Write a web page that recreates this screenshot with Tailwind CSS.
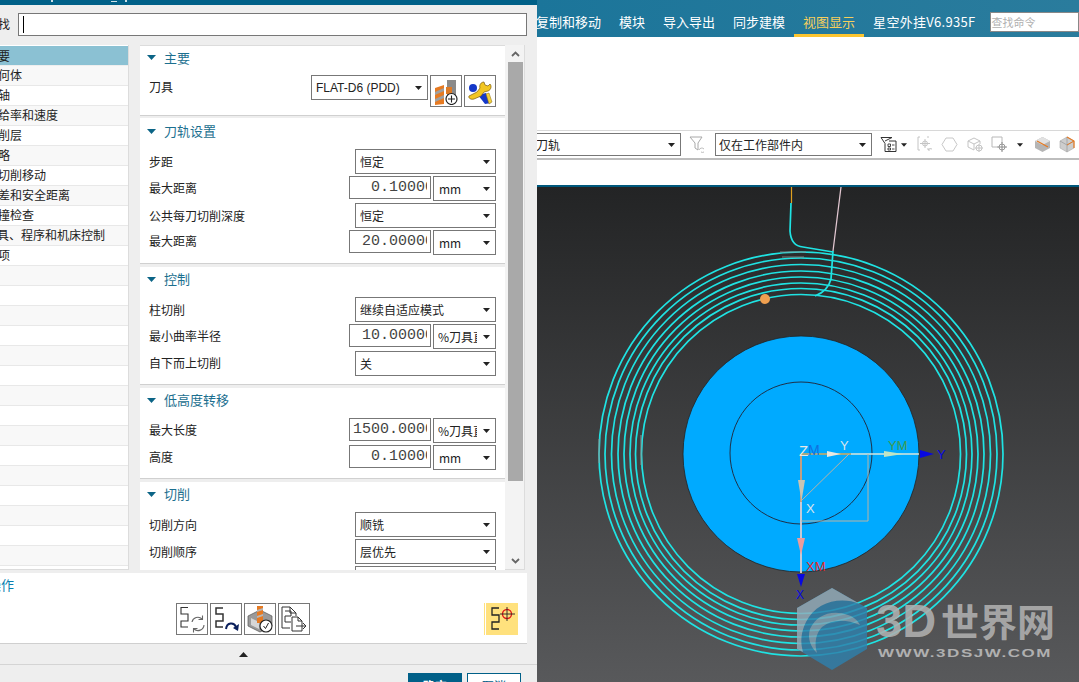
<!DOCTYPE html>
<html lang="en">
<head>
  <meta charset="UTF-8" />
  <title>刀轨设置</title>
  <script src="https://cdn.jsdelivr.net/npm/@tailwindcss/browser@4"></script>
</head>
<body class="h-[682px] w-[1079px] overflow-hidden flex bg-white text-[12px] text-[#222] font-['Noto_Sans_CJK_SC','Liberation_Sans',sans-serif]">

  <!-- dialog -->
  <aside class="w-[537px] h-[682px] shrink-0 bg-[#eeeeee] flex flex-col overflow-hidden">
    <div class="h-[5px] shrink-0 bg-[#006088] flex items-start pl-[51px]">
      <span class="w-[2px] h-[2px] bg-white/80"></span>
      <span class="ml-[58px] mt-[1px] w-[6px] h-px bg-white/80"></span>
      <span class="ml-[8px] w-[2px] h-[2px] bg-white/80"></span>
    </div>

    <!-- find -->
    <div class="h-[40px] shrink-0 flex items-start pr-[10px] pt-[8px]">
      <span class="w-[18px] -ml-[2px] leading-[22px] shrink-0">找</span>
      <div class="flex-1 h-[23px] ml-[2px] bg-white border border-[#777] flex items-center pl-[4px]"><span class="block w-px h-[17px] bg-black"></span></div>
    </div>

    <div class="flex h-[528px] shrink-0">
      <!-- nav list -->
      <ul class="w-[129px] h-[525px] shrink-0 bg-white border-r border-b border-[#dcdcdc] pt-px overflow-hidden">
        <li class="h-[20px] bg-[#8bc1d3] border-b border-[#eeeeee] leading-[19px] whitespace-nowrap"><span class="-ml-[14px] inline-block">主要</span></li>
        <li class="h-[20px] bg-[#f8f8f8] border-b border-[#e8e8e8] leading-[18px] whitespace-nowrap"><span class="-ml-[14px] inline-block">几何体</span></li>
        <li class="h-[20px] border-b border-[#e8e8e8] leading-[18px] whitespace-nowrap"><span class="-ml-[14px] inline-block">刀轴</span></li>
        <li class="h-[20px] bg-[#f8f8f8] border-b border-[#e8e8e8] leading-[18px] whitespace-nowrap"><span class="-ml-[14px] inline-block">进给率和速度</span></li>
        <li class="h-[20px] border-b border-[#e8e8e8] leading-[18px] whitespace-nowrap"><span class="-ml-[14px] inline-block">切削层</span></li>
        <li class="h-[20px] bg-[#f8f8f8] border-b border-[#e8e8e8] leading-[18px] whitespace-nowrap"><span class="-ml-[14px] inline-block">策略</span></li>
        <li class="h-[20px] border-b border-[#e8e8e8] leading-[18px] whitespace-nowrap"><span class="-ml-[14px] inline-block">非切削移动</span></li>
        <li class="h-[20px] bg-[#f8f8f8] border-b border-[#e8e8e8] leading-[18px] whitespace-nowrap"><span class="-ml-[14px] inline-block">公差和安全距离</span></li>
        <li class="h-[20px] border-b border-[#e8e8e8] leading-[18px] whitespace-nowrap"><span class="-ml-[14px] inline-block">碰撞检查</span></li>
        <li class="h-[20px] bg-[#f8f8f8] border-b border-[#e8e8e8] leading-[18px] whitespace-nowrap"><span class="-ml-[15px] inline-block">刀具、程序和机床控制</span></li>
        <li class="h-[20px] border-b border-[#e8e8e8] leading-[18px] whitespace-nowrap"><span class="-ml-[14px] inline-block">选项</span></li>
        <li class="h-[20px] bg-[#f8f8f8] border-b border-[#e8e8e8]"></li>
        <li class="h-[20px] border-b border-[#e8e8e8]"></li>
        <li class="h-[20px] bg-[#f8f8f8] border-b border-[#e8e8e8]"></li>
        <li class="h-[20px] border-b border-[#e8e8e8]"></li>
        <li class="h-[20px] bg-[#f8f8f8] border-b border-[#e8e8e8]"></li>
        <li class="h-[20px] border-b border-[#e8e8e8]"></li>
        <li class="h-[20px] bg-[#f8f8f8] border-b border-[#e8e8e8]"></li>
        <li class="h-[20px] border-b border-[#e8e8e8]"></li>
        <li class="h-[20px] bg-[#f8f8f8] border-b border-[#e8e8e8]"></li>
        <li class="h-[20px] border-b border-[#e8e8e8]"></li>
        <li class="h-[20px] bg-[#f8f8f8] border-b border-[#e8e8e8]"></li>
        <li class="h-[20px] border-b border-[#e8e8e8]"></li>
        <li class="h-[20px] bg-[#f8f8f8] border-b border-[#e8e8e8]"></li>
        <li class="h-[20px] border-b border-[#e8e8e8]"></li>
        <li class="h-[20px] bg-[#f8f8f8] border-b border-[#e8e8e8]"></li>
      </ul>

      <!-- settings -->
      <div class="ml-[11px] w-[385px] h-[525px] bg-[#f3f3f3] border-r border-b border-[#dcdcdc] flex">
        <div class="w-[365px] h-[525px] overflow-hidden shrink-0 bg-[#eeeeee]">

          <section class="h-[70px] bg-white border-t border-[#dcdcdc]">
            <h2 class="h-[22px] flex items-center gap-[8px] pl-[7px] text-[13px] text-[#1c6f8f] leading-none"><svg class="w-[9px] h-[5px] mt-px" viewBox="0 0 9 5"><path d="M0 0h9L4.500 5z" fill="#0b6486"/></svg>主要</h2>
            <div class="flex items-start pl-[9px] h-[32px] mt-[7px]">
              <span class="mt-[3px] leading-[17px]">刀具</span>
              <div class="ml-auto flex gap-[2px] pr-[9px]">
                <div class="w-[117px] h-[25px] border border-[#777] bg-white flex items-center pl-[4px] pr-[5px] font-['Liberation_Sans',sans-serif] text-[12px] text-[#222]">FLAT-D6 (PDD)<svg class="ml-auto w-[7px] h-[4px]" viewBox="0 0 7 4"><path d="M0 0h7L3.500 4z" fill="#222"/></svg></div>
                <button class="w-[32px] h-[32px] border border-[#777] bg-white flex items-center justify-center">
                  <svg class="w-[28px] h-[28px]" viewBox="0 0 28 28">
                    <path d="M3 11l9-3v19l-9 1z" fill="#e67a22"/><path d="M3 15l9-4v3l-9 4zM3 22l9-4v3l-9 4z" fill="#a0a0a0"/>
                    <path d="M15 3h9v16h-9z" fill="#8a8a8a"/><path d="M14 10h6v7h-6z" fill="#dd7a26"/>
                    <circle cx="19.500" cy="22" r="5.500" fill="#fff" stroke="#222" stroke-width="1.200"/><path d="M19.500 18.500v7M16 22h7" stroke="#222" stroke-width="1.100"/>
                  </svg>
                </button>
                <button class="w-[32px] h-[32px] border border-[#777] bg-white flex items-center justify-center">
                  <svg class="w-[28px] h-[28px]" viewBox="0 0 28 28">
                    <circle cx="7" cy="11" r="4" fill="#1538c8"/>
                    <path d="M12 18l8-2 5 10-6 1z" fill="#1538c8"/><path d="M20 17l3-1 3 9-3 2z" fill="#f3d13a" stroke="#8a6a10" stroke-width=".5"/>
                    <path d="M3 19l8-4 3-4c-1-3 1-6 4-6l1 3 3 1 2-2c2 2 1 6-2 7l-4 1-3 4-7 3c-3 1-6-1-5-3z" fill="#f2c622" stroke="#7a5a10" stroke-width=".7"/>
                  </svg>
                </button>
              </div>
            </div>
          </section>
          <div class="h-px bg-[#d0d0d0]"></div>

          <section class="h-[145px] mt-[2px] bg-white">
            <h2 class="h-[25px] flex items-center gap-[8px] pl-[7px] text-[13px] text-[#1c6f8f] leading-none"><svg class="w-[9px] h-[5px] mt-px" viewBox="0 0 9 5"><path d="M0 0h9L4.500 5z" fill="#0b6486"/></svg>刀轨设置</h2>
            <div class="flex flex-col gap-[2px] pl-[9px] pr-[9px] pt-[6px]">
              <div class="flex items-center h-[25px]"><span>步距</span><div class="ml-auto w-[141px] h-[25px] border border-[#777] bg-white flex items-center pl-[4px] pr-[5px]">恒定<svg class="ml-auto w-[7px] h-[4px]" viewBox="0 0 7 4"><path d="M0 0h7L3.500 4z" fill="#222"/></svg></div></div>
              <div class="flex items-start h-[25px]"><span class="leading-[24px]">最大距离</span><div class="ml-auto flex gap-[2px]"><div class="w-[82px] h-[23px] border border-[#777] bg-white flex pr-[3px]"><div class="flex-1 overflow-hidden flex justify-end items-center pt-[2px]"><span class="shrink-0 -mr-[7px] font-['Liberation_Mono',monospace] text-[15px] text-[#444]">0.10000</span></div></div><div class="w-[63px] h-[25px] border border-[#777] bg-white flex items-center pl-[5px] pr-[5px]">mm<svg class="ml-auto w-[7px] h-[4px]" viewBox="0 0 7 4"><path d="M0 0h7L3.500 4z" fill="#222"/></svg></div></div></div>
              <div class="flex items-center h-[25px]"><span>公共每刀切削深度</span><div class="ml-auto w-[141px] h-[25px] border border-[#777] bg-white flex items-center pl-[4px] pr-[5px]">恒定<svg class="ml-auto w-[7px] h-[4px]" viewBox="0 0 7 4"><path d="M0 0h7L3.500 4z" fill="#222"/></svg></div></div>
              <div class="flex items-start h-[25px]"><span class="leading-[22px]">最大距离</span><div class="ml-auto flex gap-[2px]"><div class="w-[82px] h-[23px] border border-[#777] bg-white flex pr-[3px]"><div class="flex-1 overflow-hidden flex justify-end items-center pt-[2px]"><span class="shrink-0 -mr-[7px] font-['Liberation_Mono',monospace] text-[15px] text-[#444]">20.00000</span></div></div><div class="w-[63px] h-[25px] border border-[#777] bg-white flex items-center pl-[5px] pr-[5px]">mm<svg class="ml-auto w-[7px] h-[4px]" viewBox="0 0 7 4"><path d="M0 0h7L3.500 4z" fill="#222"/></svg></div></div></div>
            </div>
          </section>
          <div class="h-px bg-[#d0d0d0]"></div>

          <section class="h-[117px] mt-[3px] bg-white">
            <h2 class="h-[23px] flex items-center gap-[8px] pl-[7px] text-[13px] text-[#1c6f8f] leading-none"><svg class="w-[9px] h-[5px] mt-px" viewBox="0 0 9 5"><path d="M0 0h9L4.500 5z" fill="#0b6486"/></svg>控制</h2>
            <div class="flex flex-col gap-[2px] pl-[9px] pr-[9px] pt-[7px]">
              <div class="flex items-center h-[25px]"><span>柱切削</span><div class="ml-auto w-[141px] h-[25px] border border-[#777] bg-white flex items-center pl-[4px] pr-[5px]">继续自适应模式<svg class="ml-auto w-[7px] h-[4px]" viewBox="0 0 7 4"><path d="M0 0h7L3.500 4z" fill="#222"/></svg></div></div>
              <div class="flex items-start h-[25px]"><span class="leading-[24px]">最小曲率半径</span><div class="ml-auto flex gap-[2px]"><div class="w-[82px] h-[23px] border border-[#777] bg-white flex pr-[3px]"><div class="flex-1 overflow-hidden flex justify-end items-center pt-[2px]"><span class="shrink-0 -mr-[7px] font-['Liberation_Mono',monospace] text-[15px] text-[#444]">10.00000</span></div></div><div class="w-[63px] h-[25px] border border-[#777] bg-white flex items-center pl-[4px] pr-[5px]"><span class="w-[39px] overflow-hidden whitespace-nowrap">%刀具直径</span><svg class="ml-auto w-[7px] h-[4px]" viewBox="0 0 7 4"><path d="M0 0h7L3.500 4z" fill="#222"/></svg></div></div></div>
              <div class="flex items-center h-[25px]"><span class="-mt-px">自下而上切削</span><div class="ml-auto w-[141px] h-[25px] border border-[#777] bg-white flex items-center pl-[4px] pr-[5px]">关<svg class="ml-auto w-[7px] h-[4px]" viewBox="0 0 7 4"><path d="M0 0h7L3.500 4z" fill="#222"/></svg></div></div>
            </div>
          </section>
          <div class="h-px bg-[#d0d0d0]"></div>

          <section class="h-[90px] mt-[3px] bg-white">
            <h2 class="h-[23px] flex items-center gap-[8px] pl-[7px] text-[13px] text-[#1c6f8f] leading-none"><svg class="w-[9px] h-[5px] mt-px" viewBox="0 0 9 5"><path d="M0 0h9L4.500 5z" fill="#0b6486"/></svg>低高度转移</h2>
            <div class="flex flex-col gap-[2px] pl-[9px] pr-[9px] pt-[7px]">
              <div class="flex items-start h-[25px]"><span class="leading-[24px]">最大长度</span><div class="ml-auto flex gap-[2px]"><div class="w-[82px] h-[23px] border border-[#777] bg-white flex pr-[3px]"><div class="flex-1 overflow-hidden flex justify-end items-center pt-[2px]"><span class="shrink-0 -mr-[7px] font-['Liberation_Mono',monospace] text-[15px] text-[#444]">1500.0000</span></div></div><div class="w-[63px] h-[25px] border border-[#777] bg-white flex items-center pl-[4px] pr-[5px]"><span class="w-[39px] overflow-hidden whitespace-nowrap">%刀具直径</span><svg class="ml-auto w-[7px] h-[4px]" viewBox="0 0 7 4"><path d="M0 0h7L3.500 4z" fill="#222"/></svg></div></div></div>
              <div class="flex items-start h-[25px]"><span class="leading-[24px]">高度</span><div class="ml-auto flex gap-[2px]"><div class="w-[82px] h-[23px] border border-[#777] bg-white flex pr-[3px]"><div class="flex-1 overflow-hidden flex justify-end items-center pt-[2px]"><span class="shrink-0 -mr-[7px] font-['Liberation_Mono',monospace] text-[15px] text-[#444]">0.10000</span></div></div><div class="w-[63px] h-[25px] border border-[#777] bg-white flex items-center pl-[5px] pr-[5px]">mm<svg class="ml-auto w-[7px] h-[4px]" viewBox="0 0 7 4"><path d="M0 0h7L3.500 4z" fill="#222"/></svg></div></div></div>
            </div>
          </section>
          <div class="h-px bg-[#d0d0d0]"></div>

          <section class="h-[100px] mt-[3px] bg-white">
            <h2 class="h-[23px] flex items-center gap-[8px] pl-[7px] text-[13px] text-[#1c6f8f] leading-none"><svg class="w-[9px] h-[5px] mt-px" viewBox="0 0 9 5"><path d="M0 0h9L4.500 5z" fill="#0b6486"/></svg>切削</h2>
            <div class="flex flex-col gap-[2px] pl-[9px] pr-[9px] pt-[7px]">
              <div class="flex items-center h-[25px]"><span>切削方向</span><div class="ml-auto w-[141px] h-[25px] border border-[#777] bg-white flex items-center pl-[4px] pr-[5px]">顺铣<svg class="ml-auto w-[7px] h-[4px]" viewBox="0 0 7 4"><path d="M0 0h7L3.500 4z" fill="#222"/></svg></div></div>
              <div class="flex items-center h-[25px]"><span>切削顺序</span><div class="ml-auto w-[141px] h-[25px] border border-[#777] bg-white flex items-center pl-[4px] pr-[5px]">层优先<svg class="ml-auto w-[7px] h-[4px]" viewBox="0 0 7 4"><path d="M0 0h7L3.500 4z" fill="#222"/></svg></div></div>
              <div class="ml-auto w-[141px] h-[25px] border border-[#777] bg-white"></div>
            </div>
          </section>
        </div>

        <!-- scrollbar -->
        <div class="ml-[3px] w-[15px] flex flex-col">
          <div class="h-[17px] flex items-center justify-center"><svg class="w-[9px] h-[6px]" viewBox="0 0 9 6"><path d="M1 5l3.500-3.500L8 5" fill="none" stroke="#666" stroke-width="1.800"/></svg></div>
          <div class="h-[419px] bg-[#a9a9a9]"></div>
          <div class="flex-1 flex items-end justify-center pb-[5px]"><svg class="w-[9px] h-[6px]" viewBox="0 0 9 6"><path d="M1 1l3.500 3.500L8 1" fill="none" stroke="#666" stroke-width="1.800"/></svg></div>
        </div>
      </div>
    </div>

    <!-- action -->
    <div class="h-[71px] w-[527px] shrink-0 bg-white border-b border-[#cfcfcf]">
      <span class="block -ml-[12px] pt-[3px] text-[13px] text-[#0b7fb0] leading-[17px]">操作</span>
      <div class="flex items-start pl-[176px] pt-[10px] pr-[9px]">
        <div class="flex gap-[2px]">
          <button class="w-[32px] h-[32px] border border-[#777] bg-white flex items-center justify-center">
            <svg class="w-[28px] h-[28px]" viewBox="0 0 28 28" fill="none" stroke="#333" stroke-width="1.100"><path d="M10 2.500H3V9h7v7H3v6h7"/><path d="M14 17a6 6 0 0110-3M26 20a6 6 0 01-10 4" stroke="#666"/><path d="M24.500 10.500v4h-4M15.500 27.500v-4h4" stroke="#666"/></svg>
          </button>
          <button class="w-[32px] h-[32px] border border-[#777] bg-white flex items-center justify-center">
            <svg class="w-[28px] h-[28px]" viewBox="0 0 28 28" fill="none" stroke="#333" stroke-width="1.500"><path d="M11 3H4v6h7v7H4v6h7"/><path d="M14 24c1-7 8-7 10-2" stroke="#0a1f5c" stroke-width="2"/><path d="M27 19l-1 7-5-3z" fill="#0a1f5c" stroke="none"/></svg>
          </button>
          <button class="w-[32px] h-[32px] border border-[#777] bg-white flex items-center justify-center">
            <svg class="w-[28px] h-[28px]" viewBox="0 0 28 28"><path d="M2 11l12-6 12 6v10l-12 6-12-6z" fill="#9a9a9a" stroke="#555" stroke-width=".7"/><path d="M5 13l8 4v7l-8-4z" fill="#d6d6d6"/><path d="M11 1h6v17h-6z" fill="#e67a22"/><path d="M11 5l6-2v2l-6 2zM11 11l6-2v2l-6 2z" fill="#b8b8b8"/><circle cx="20" cy="21" r="6" fill="#fff" stroke="#222" stroke-width="1.100"/><path d="M17.500 21l2 2.500 3-5.500" fill="none" stroke="#222" stroke-width="1"/></svg>
          </button>
          <button class="w-[32px] h-[32px] border border-[#777] bg-white flex items-center justify-center">
            <svg class="w-[28px] h-[28px]" viewBox="0 0 28 28" fill="none" stroke="#333" stroke-width="1"><path d="M2 2h8l6 6v3M10 2v6h6M2 2v21h8"/><path d="M5 6h6v5H5v6h6"/><path d="M12 12h6l4 4v10H12z"/><path d="M18 12v4h4M16 21h10M23 18l3 3-3 3"/></svg>
          </button>
        </div>
        <div class="ml-auto w-[34px] h-[32px] flex">
          <span class="w-px bg-[#ffe17d]"></span>
          <span class="w-px"></span>
          <div class="flex-1 bg-[#ffe17d] flex items-center justify-center">
            <svg class="w-[28px] h-[28px]" viewBox="0 0 28 28" fill="none"><path d="M11 3H4v7h7v7H4v7h7" stroke="#222" stroke-width="1.300"/><circle cx="19" cy="9" r="4.500" stroke="#e01b1b" stroke-width="1.400"/><path d="M12 9h15M19 2v14" stroke="#222" stroke-width=".9"/></svg>
          </div>
        </div>
      </div>
    </div>

    <div class="h-[21px] shrink-0 border-b border-[#d4d4d4] flex items-center justify-center pr-[50px]"><svg class="w-[9px] h-[5px]" viewBox="0 0 9 5"><path d="M0 5h9L4.500 0z" fill="#222"/></svg></div>

    <div class="flex justify-end gap-[5px] pr-[16px] pt-[8px]">
      <button class="w-[54px] h-[26px] bg-[#006088] text-white font-bold text-[12px] leading-[24px]">确定</button>
      <button class="w-[54px] h-[26px] bg-white border border-[#006088] text-[#006088] text-[12px] leading-[24px]">取消</button>
    </div>
  </aside>

  <!-- main window -->
  <main class="flex-1 min-w-0 h-[682px] flex flex-col overflow-hidden">
    <nav class="h-[37px] shrink-0 bg-gradient-to-r from-[#1b759a] to-[#2a7c9d] flex items-start text-[13px] text-white whitespace-nowrap">
      <span class="ml-[-1px] mt-[13px] leading-[18px]">复制和移动</span>
      <span class="ml-[18px] mt-[13px] leading-[18px]">模块</span>
      <span class="ml-[18px] mt-[13px] leading-[18px]">导入导出</span>
      <span class="ml-[18px] mt-[13px] leading-[18px]">同步建模</span>
      <span class="ml-[9px] px-[9px] h-[37px] pt-[13px] leading-[18px] text-[#f6cf5c] border-b-[3px] border-[#fcc52f]">视图显示</span>
      <span class="ml-[9px] mt-[13px] leading-[18px] tracking-[0.300px]">星空外挂V6.935F</span>
      <div class="ml-[14px] mt-[12px] w-[100px] h-[20px] bg-white border border-[#888] text-[#b0b0b0] text-[11px] leading-[18px] pl-px">查找命令</div>
    </nav>
    <div class="h-[93px] shrink-0"></div>
    <div class="h-[30px] shrink-0 border-t border-b-2 border-t-[#d8d8d8] border-b-[#bdbdbd] flex items-center text-[#222]">
      <div class="w-[145px] h-[23px] -ml-px border border-[#777] border-l-0 bg-white flex items-center pr-[5px]">刀轨<svg class="ml-auto w-[7px] h-[4px]" viewBox="0 0 7 4"><path d="M0 0h7L3.500 4z" fill="#222"/></svg></div>
      <svg class="ml-[8px] w-[17px] h-[17px]" viewBox="0 0 17 17" fill="none" stroke="#a8a8a8" stroke-width="1"><path d="M1 1h12L9 7v7L6 12V7z"/><path d="M10 14a3 3 0 015-1M15 16a3 3 0 01-3 0" stroke="#bbb"/></svg>
      <div class="ml-[9px] w-[157px] h-[23px] border border-[#777] bg-white flex items-center pl-[3px] pr-[5px]">仅在工作部件内<svg class="ml-auto w-[7px] h-[4px]" viewBox="0 0 7 4"><path d="M0 0h7L3.500 4z" fill="#222"/></svg></div>
      <svg class="ml-[8px] w-[17px] h-[17px]" viewBox="0 0 17 17" fill="none" stroke="#333" stroke-width="1"><path d="M1 1.500h11M1 1.500l4 6v8h11V5H9M5 5l7-3.500"/><path d="M8 8h2.500v2.500H8zM12 9h2.500M8 12h2.500v2H8zM12 13h2.500" stroke-width=".9"/></svg>
      <svg class="ml-[4px] w-[6px] h-[4px]" viewBox="0 0 7 4"><path d="M0 0h7L3.500 4z" fill="#222"/></svg>
      <svg class="ml-[10px] w-[17px] h-[17px]" viewBox="0 0 17 17" fill="none" stroke="#c4c4c4" stroke-width="1"><path d="M3 1H1v13h2M10 1h2"/><circle cx="8" cy="7.500" r="2.500"/><path d="M3 7.500h10M8 3v9M11 14a3 3 0 014-1M11 12v2h2"/></svg>
      <svg class="ml-[7px] w-[17px] h-[17px]" viewBox="0 0 17 17" fill="none" stroke="#c8c8c8" stroke-width="1"><path d="M5 2h7l4 6.500-4 6.500H5L1 8.500z"/></svg>
      <svg class="ml-[9px] w-[17px] h-[17px]" viewBox="0 0 17 17" fill="none" stroke="#c4c4c4" stroke-width="1"><path d="M1 5l6-3 6 3-6 3zM1 5v6l6 3V8M13 5v3"/><circle cx="12" cy="12" r="3"/><path d="M8 12h8M12 8v8"/></svg>
      <svg class="ml-[7px] w-[17px] h-[17px]" viewBox="0 0 17 17" fill="none" stroke="#b8b8b8" stroke-width="1"><path d="M1 1h10v6M1 1v10h5"/><circle cx="11" cy="11" r="3" stroke="#999"/><path d="M6 11h10M11 6v10" stroke="#888"/></svg>
      <svg class="ml-[9px] w-[6px] h-[4px]" viewBox="0 0 7 4"><path d="M0 0h7L3.500 4z" fill="#222"/></svg>
      <svg class="ml-[11px] w-[17px] h-[17px]" viewBox="0 0 17 17"><path d="M1 5l7.500-4L16 5v7l-7.500 4L1 12z" fill="#b5b5b5"/><path d="M1 5l7.500 4L16 5l-7.500-4z" fill="#e2e2e2"/><path d="M3 5l11 6" stroke="#e67a22" stroke-width="1.400"/></svg>
      <svg class="ml-[8px] w-[16px] h-[17px]" viewBox="0 0 16 17"><path d="M1 5l7-4 7 4v7l-7 4-7-4z" fill="#cdcdcd" stroke="#aaa" stroke-width=".6"/><path d="M8 1v15M1 5l7 4 7-4" fill="none" stroke="#999" stroke-width=".7"/><path d="M8 1l7 4v7" fill="none" stroke="#e67a22" stroke-width="1.200"/><path d="M8 9l7-4" stroke="#e67a22" stroke-width="1"/></svg>
    </div>
    <div class="h-[25px] shrink-0"></div>

    <!-- graphics window -->
    <div class="flex-1 min-h-0 border-t-2 border-[#00587c]">
      <svg class="block w-[542px] h-[496px]" viewBox="537 186 542 496">
        <defs>
          <linearGradient id="bg" x1="0" y1="0" x2="0" y2="1"><stop offset="0" stop-color="#232425"/><stop offset="1" stop-color="#58595b"/></linearGradient>
        </defs>
        <rect x="537" y="186" width="542" height="496" fill="url(#bg)"/>
        <circle cx="801" cy="453" r="118" fill="#00aaff" stroke="#222" stroke-width=".8"/>
        <circle cx="801" cy="452" r="71" fill="none" stroke="#223" stroke-width=".9"/>
        <g fill="none" stroke="#1fe3e3" stroke-width="1.700">
          <circle cx="801" cy="453" r="202"/><circle cx="801" cy="453" r="196"/><circle cx="801" cy="453" r="189.500"/><circle cx="801" cy="453" r="183"/>
          <circle cx="801" cy="453" r="177"/><circle cx="801" cy="453" r="171"/><circle cx="801" cy="453" r="165.500"/><circle cx="801" cy="453" r="159.500"/>
          <path d="M791 202l-1 28q1 15 13 16l30 5"/><path d="M833 250l-2 28q-3 12-16 17"/>
        </g>
        <g stroke="#8f9494" stroke-width="1.200" opacity=".8"><path d="M599 438v24M641 434v30M780 251h26M782 256h22"/></g>
        <path d="M791.500 186v16" stroke="#e0a020" stroke-width="1.200"/>
        <path d="M841 186l-8 64" stroke="#e3c8d2" stroke-width="1.300"/>
        <circle cx="765" cy="298" r="5" fill="#f0a050"/>

        <!-- triad -->
        <path d="M801 453h118" stroke="#d8e6dc" stroke-width="1.400"/><path d="M801 453h50" stroke="#a09a60" stroke-width="1.400"/>
        <path d="M801 453v119" stroke="#dccdd2" stroke-width="1.800"/><path d="M801 453v48" stroke="#bf9a7a" stroke-width="1.800"/>
        <path d="M849 453l-48 47M868 453v67h-67" fill="none" stroke="#b9b3a5" stroke-width="1"/>
        <path d="M827 450l14 3-14 3z" fill="#e8e8e0"/><path d="M884 450l19 3-19 3z" fill="#bfe4c4"/>
        <path d="M798 479h7l-3.500 21z" fill="#c8c4b4"/><path d="M797 537h8l-4 17z" fill="#eb9c9c"/>
        <path d="M920 449l14 4-14 4z" fill="#0808e0"/><path d="M797 573h8l-4 13z" fill="#0808e0"/>
        <g font-family="Liberation Sans, sans-serif" font-size="13">
          <text x="799" y="455" fill="#e8e8e8" font-size="15">Z</text><text x="808" y="454" fill="#1070e0" font-size="14">M</text>
          <text x="840" y="449" fill="#d8e4ec">Y</text><text x="888" y="449" fill="#3f9a52">YM</text>
          <text x="937" y="458" fill="#0808e0">Y</text><text x="806" y="512" fill="#d8e4ec">X</text>
          <text x="806" y="570" fill="#e02a2a">XM</text><text x="796" y="598" fill="#0808e0" font-size="12">X</text>
        </g>

        <!-- watermark -->
        <g opacity=".82">
          <path d="M832 587l35 20v41l-35 21-35-21v-41z" fill="#2f80ac"/>
          <path d="M797 607l35-20 28 16c-20-8-44-2-54 18-5 10-6 20-3 30l-6-3z" fill="#94adbb"/>
          <path d="M810 628c6-14 22-20 38-14 6 2 10 6 12 10-14-6-28-6-38 2-6 6-8 16-5 26-6-6-10-14-7-24z" fill="#7fa3b6"/>
        </g>
        <g font-family="Liberation Sans, Noto Sans CJK SC, sans-serif" font-weight="700" fill="#b0b0b0" fill-opacity=".9">
          <text x="876" y="636" font-size="47">3D</text>
          <text x="941" y="635" font-size="38">世界网</text>
        </g>
        <text x="878" y="656" font-family="Liberation Sans, sans-serif" font-weight="700" font-size="11" letter-spacing="1" textLength="174" lengthAdjust="spacingAndGlyphs" fill="#b0b0b0">WWW.3DSJW.COM</text>
      </svg>
    </div>
  </main>
</body>
</html>
